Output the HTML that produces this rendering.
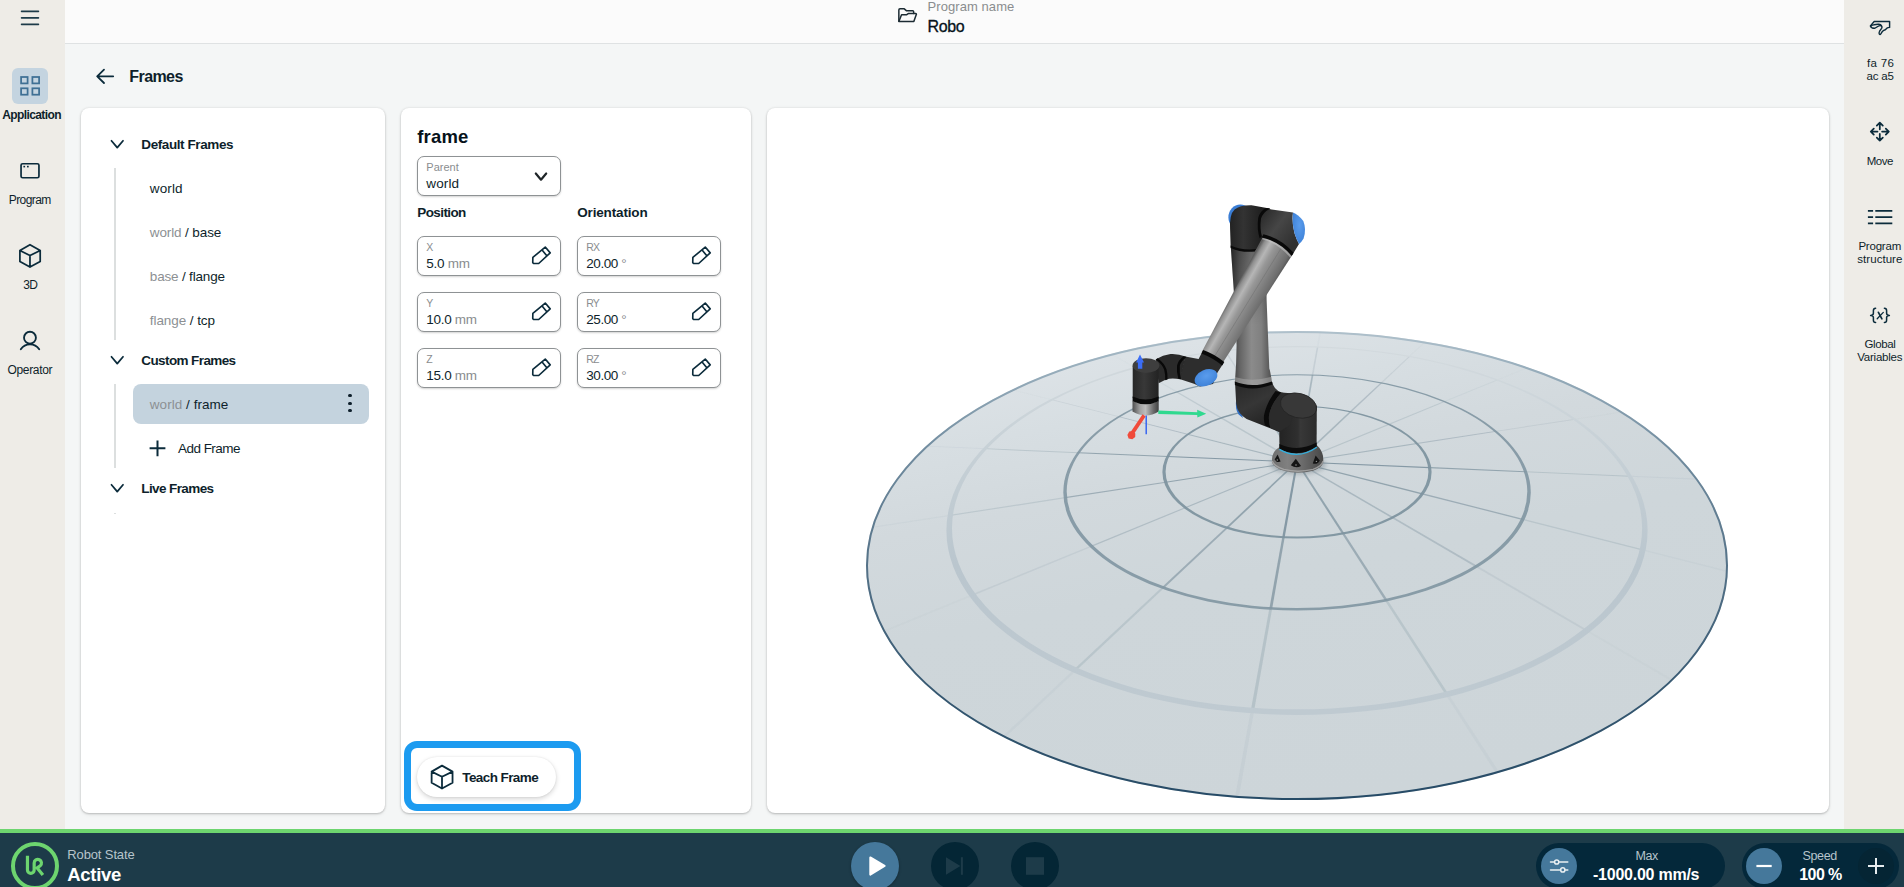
<!DOCTYPE html>
<html lang="en"><head><meta charset="utf-8"><title>Frames</title>
<style>

*{box-sizing:border-box;margin:0;padding:0}
html,body{width:1904px;height:887px;overflow:hidden;background:#f4f6f6}
body{font-family:"Liberation Sans",sans-serif;color:#0e1f2b}
#app{position:relative;width:1904px;height:887px;overflow:hidden;background:#f4f6f6}
.a{position:absolute}
.t{position:absolute;white-space:pre}
.side-l{left:0;top:0;width:65px;height:829px;background:#eeece7}
.side-r{left:1844px;top:0;width:60px;height:829px;background:#eeece7}
.hdr{left:65px;top:0;width:1779px;height:44px;background:#fbfbfb;border-bottom:1px solid #dfe2e3}
.panel{background:#fff;border-radius:8px;box-shadow:0 1px 2px rgba(0,0,0,.17),0 2px 4px rgba(0,0,0,.05),0 0 3px rgba(0,0,0,.10)}
.appbg{left:12px;top:68px;width:36px;height:36px;border-radius:6px;background:#c4d4e0}
.tline{width:1.5px;background:#dcdfdf;left:114.4px}
.sel{left:133px;top:384px;width:235.5px;height:40px;border-radius:8px;background:#c4d3de}
.dot{width:3.2px;height:3.2px;border-radius:50%;background:#0e1f2b;left:348.4px}
.fld{height:39.5px;width:143.5px;border:1px solid #8e9294;border-radius:7px;background:#fff;box-shadow:0 1px 2px rgba(0,0,0,.18)}
.hl{left:404px;top:741px;width:176.6px;height:70px;border:7px solid #1c9bf0;border-radius:13px}
.pill{left:417px;top:757px;width:139px;height:40px;border-radius:20px;background:#fff;box-shadow:0 2px 5px rgba(0,0,0,.17),0 0 2px rgba(0,0,0,.08)}
.green{left:0;top:829px;width:1904px;height:4px;background:#6dd56f}
.bar{left:0;top:833px;width:1904px;height:54px;background:#1d3b49}
.circ{border-radius:50%}
.bpill{top:843px;height:46px;border-radius:23px;background:#04283a}

</style></head>
<body>
<div id="app">
<div class="a side-l"></div>
<div class="a side-r"></div>
<div class="a hdr"></div>
<div class="a appbg"></div>
<div class="a panel" style="left:81px;top:108px;width:304px;height:704.9px"></div>
<div class="a panel" style="left:401px;top:108px;width:350px;height:704.9px"></div>
<div class="a panel" style="left:767px;top:108px;width:1062px;height:704.9px"></div>
<div class="a tline" style="top:168px;height:172px"></div>
<div class="a tline" style="top:384px;height:84px"></div>
<div class="a tline" style="top:512.5px;height:1px"></div>
<div class="a sel"></div>
<div class="a dot" style="top:394.2px"></div>
<div class="a dot" style="top:401.7px"></div>
<div class="a dot" style="top:409.2px"></div>
<div class="a fld" style="left:417px;top:156.3px"></div>
<div class="a fld" style="left:417px;top:236.2px"></div>
<div class="a fld" style="left:577px;top:236.2px"></div>
<div class="a fld" style="left:417px;top:292.2px"></div>
<div class="a fld" style="left:577px;top:292.2px"></div>
<div class="a fld" style="left:417px;top:348.2px"></div>
<div class="a fld" style="left:577px;top:348.2px"></div>
<div class="a hl"></div>
<div class="a pill"></div>
<div class="a green"></div>
<div class="a bar"></div>
<div class="a circ" style="left:10.9px;top:841.9px;width:48.1px;height:48.1px;border:4.4px solid #6dd56f"></div>
<div class="a circ" style="left:851px;top:841.7px;width:48px;height:48px;background:#45789b;box-shadow:0 1px 3px rgba(0,0,0,.3)"></div>
<div class="a circ" style="left:931px;top:842.2px;width:48px;height:48px;background:#042635"></div>
<div class="a circ" style="left:1011px;top:842.2px;width:48px;height:48px;background:#042635"></div>
<div class="a bpill" style="left:1536px;width:189px"></div>
<div class="a bpill" style="left:1741.5px;width:157.5px"></div>
<div class="a circ" style="left:1541px;top:847.9px;width:36px;height:36px;background:#45789b"></div>
<div class="a circ" style="left:1746px;top:847.9px;width:36px;height:36px;background:#45789b"></div>
<div class="a circ" style="left:1858px;top:847.9px;width:36px;height:36px;background:#052534"></div>
<svg class="a" style="left:767px;top:108px" width="1062" height="704" viewBox="767 108 1062 704">
<defs><linearGradient id="dg" gradientUnits="userSpaceOnUse" x1="1250" y1="331" x2="1340" y2="800"><stop offset="0" stop-color="#dce2e6"/><stop offset=".12" stop-color="#d7dee2"/><stop offset=".28" stop-color="#d2d9dd"/><stop offset=".5" stop-color="#ced6da"/><stop offset="1" stop-color="#cdd5d9"/></linearGradient><linearGradient id="edge" gradientUnits="userSpaceOnUse" x1="0" y1="330" x2="0" y2="800"><stop offset="0" stop-color="#b0c1cc"/><stop offset=".08" stop-color="#98aebc"/><stop offset=".25" stop-color="#728da0"/><stop offset=".5" stop-color="#557288"/><stop offset=".78" stop-color="#355770"/><stop offset="1" stop-color="#274b66"/></linearGradient><linearGradient id="r3" gradientUnits="userSpaceOnUse" x1="0" y1="346" x2="0" y2="712"><stop offset="0" stop-color="#d3dade"/><stop offset=".3" stop-color="#c6d0d6"/><stop offset=".6" stop-color="#bac6ce"/><stop offset="1" stop-color="#bfcad1"/></linearGradient><clipPath id="dc"><ellipse cx="1297.0" cy="565.5" rx="430.9" ry="234.5"/></clipPath><filter id="b0" x="-5%" y="-5%" width="110%" height="110%"><feGaussianBlur stdDeviation="0.45"/></filter><filter id="b1" x="-5%" y="-5%" width="110%" height="110%"><feGaussianBlur stdDeviation="0.6"/></filter><filter id="b2" x="-50%" y="-50%" width="200%" height="200%"><feGaussianBlur stdDeviation="2.2"/></filter></defs>
<ellipse cx="1297.0" cy="565.5" rx="430.9" ry="234.5" fill="url(#dg)"/>
<g clip-path="url(#dc)" stroke="none" filter="url(#b0)">
<path d="M1297.4,465.8 L1284.7,537.2 L1282.3,537.1 L1295.3,465.7 Z" fill="#8397a3" fill-opacity="0.97"/>
<path d="M1284.7,537.2 L1272.2,608.5 L1269.4,608.3 L1282.3,537.1 Z" fill="#8397a3" fill-opacity="0.80"/>
<path d="M1272.2,608.5 L1254.1,710.7 L1250.8,710.5 L1269.4,608.3 Z" fill="#8397a3" fill-opacity="0.32"/>
<path d="M1254.1,710.7 L1238.7,797.8 L1235.0,797.5 L1250.8,710.5 Z" fill="#8397a3" fill-opacity="0.10"/>
<path d="M1300.3,465.5 L1344.3,533.2 L1342.0,533.7 L1298.3,465.8 Z" fill="#8397a3" fill-opacity="0.80"/>
<path d="M1344.3,533.2 L1387.5,599.9 L1384.9,600.4 L1342.0,533.7 Z" fill="#8397a3" fill-opacity="0.66"/>
<path d="M1387.5,599.9 L1448.4,693.9 L1445.5,694.6 L1384.9,600.4 Z" fill="#8397a3" fill-opacity="0.27"/>
<path d="M1448.4,693.9 L1499.4,772.5 L1496.2,773.4 L1445.5,694.6 Z" fill="#8397a3" fill-opacity="0.08"/>
<path d="M1302.8,464.6 L1393.3,517.1 L1391.7,518.0 L1301.2,465.2 Z" fill="#8397a3" fill-opacity="0.49"/>
<path d="M1393.3,517.1 L1477.2,565.8 L1475.5,566.9 L1391.7,518.0 Z" fill="#8397a3" fill-opacity="0.40"/>
<path d="M1477.2,565.8 L1587.5,629.9 L1585.9,631.2 L1475.5,566.9 Z" fill="#8397a3" fill-opacity="0.16"/>
<path d="M1587.5,629.9 L1673.3,679.7 L1671.7,681.2 L1585.9,631.2 Z" fill="#8397a3" fill-opacity="0.05"/>
<path d="M1304.4,463.3 L1422.7,493.3 L1421.9,494.4 L1303.4,464.2 Z" fill="#8397a3" fill-opacity="0.80"/>
<path d="M1422.7,493.3 L1522.9,518.8 L1522.3,519.9 L1421.9,494.4 Z" fill="#8397a3" fill-opacity="0.66"/>
<path d="M1522.9,518.8 L1642.8,549.2 L1642.5,550.5 L1522.3,519.9 Z" fill="#8397a3" fill-opacity="0.27"/>
<path d="M1642.8,549.2 L1727.8,570.8 L1727.8,572.2 L1642.5,550.5 Z" fill="#8397a3" fill-opacity="0.08"/>
<path d="M1304.8,461.8 L1429.6,467.1 L1429.8,468.2 L1304.6,462.8 Z" fill="#8397a3" fill-opacity="0.97"/>
<path d="M1429.6,467.1 L1525.3,471.2 L1525.7,472.3 L1429.8,468.2 Z" fill="#8397a3" fill-opacity="0.80"/>
<path d="M1525.3,471.2 L1629.4,475.7 L1630.1,476.8 L1525.7,472.3 Z" fill="#8397a3" fill-opacity="0.32"/>
<path d="M1629.4,475.7 L1697.2,478.6 L1698.0,479.7 L1630.1,476.8 Z" fill="#8397a3" fill-opacity="0.10"/>
<path d="M1304.0,460.4 L1416.5,443.1 L1417.4,444.0 L1304.7,461.4 Z" fill="#8397a3" fill-opacity="0.53"/>
<path d="M1416.5,443.1 L1495.1,431.0 L1496.1,431.8 L1417.4,444.0 Z" fill="#8397a3" fill-opacity="0.44"/>
<path d="M1495.1,431.0 L1574.0,418.9 L1575.1,419.7 L1496.1,431.8 Z" fill="#8397a3" fill-opacity="0.18"/>
<path d="M1574.0,418.9 L1622.0,411.5 L1623.2,412.3 L1575.1,419.7 Z" fill="#8397a3" fill-opacity="0.05"/>
<path d="M1302.2,459.2 L1388.2,424.0 L1389.5,424.7 L1303.6,460.0 Z" fill="#8397a3" fill-opacity="0.32"/>
<path d="M1388.2,424.0 L1443.8,401.3 L1445.2,401.8 L1389.5,424.7 Z" fill="#8397a3" fill-opacity="0.27"/>
<path d="M1443.8,401.3 L1496.5,379.7 L1497.9,380.2 L1445.2,401.8 Z" fill="#8397a3" fill-opacity="0.11"/>
<path d="M1496.5,379.7 L1527.1,367.2 L1528.5,367.7 L1497.9,380.2 Z" fill="#8397a3" fill-opacity="0.03"/>
<path d="M1299.6,458.4 L1349.7,411.6 L1351.4,411.9 L1301.5,458.9 Z" fill="#8397a3" fill-opacity="0.53"/>
<path d="M1349.7,411.6 L1380.6,382.7 L1382.2,383.0 L1351.4,411.9 Z" fill="#8397a3" fill-opacity="0.44"/>
<path d="M1380.6,382.7 L1408.7,356.4 L1410.2,356.6 L1382.2,383.0 Z" fill="#8397a3" fill-opacity="0.18"/>
<path d="M1408.7,356.4 L1424.6,341.5 L1426.0,341.8 L1410.2,356.6 Z" fill="#8397a3" fill-opacity="0.05"/>
<path d="M1296.6,458.2 L1306.1,406.3 L1307.9,406.4 L1298.7,458.3 Z" fill="#8397a3" fill-opacity="0.65"/>
<path d="M1306.1,406.3 L1311.7,375.0 L1313.4,375.1 L1307.9,406.4 Z" fill="#8397a3" fill-opacity="0.53"/>
<path d="M1311.7,375.0 L1316.8,347.0 L1318.4,347.0 L1313.4,375.1 Z" fill="#8397a3" fill-opacity="0.22"/>
<path d="M1316.8,347.0 L1319.7,331.3 L1321.1,331.4 L1318.4,347.0 Z" fill="#8397a3" fill-opacity="0.06"/>
<path d="M1293.7,458.6 L1261.5,408.6 L1263.3,408.3 L1295.7,458.3 Z" fill="#8397a3" fill-opacity="0.53"/>
<path d="M1261.5,408.6 L1242.0,378.2 L1243.6,378.0 L1263.3,408.3 Z" fill="#8397a3" fill-opacity="0.44"/>
<path d="M1242.0,378.2 L1224.3,350.7 L1225.8,350.6 L1243.6,378.0 Z" fill="#8397a3" fill-opacity="0.18"/>
<path d="M1224.3,350.7 L1214.4,335.4 L1215.9,335.2 L1225.8,350.6 Z" fill="#8397a3" fill-opacity="0.05"/>
<path d="M1291.3,459.5 L1220.4,418.2 L1222.0,417.6 L1292.9,458.8 Z" fill="#8397a3" fill-opacity="0.32"/>
<path d="M1220.4,418.2 L1175.7,392.1 L1177.2,391.6 L1222.0,417.6 Z" fill="#8397a3" fill-opacity="0.27"/>
<path d="M1175.7,392.1 L1134.3,367.9 L1135.7,367.5 L1177.2,391.6 Z" fill="#8397a3" fill-opacity="0.11"/>
<path d="M1134.3,367.9 L1110.5,354.1 L1111.9,353.7 L1135.7,367.5 Z" fill="#8397a3" fill-opacity="0.03"/>
<path d="M1289.7,460.7 L1187.4,434.7 L1188.5,433.9 L1290.7,459.8 Z" fill="#8397a3" fill-opacity="0.53"/>
<path d="M1187.4,434.7 L1118.5,417.1 L1119.7,416.4 L1188.5,433.9 Z" fill="#8397a3" fill-opacity="0.44"/>
<path d="M1118.5,417.1 L1051.4,400.1 L1052.6,399.4 L1119.7,416.4 Z" fill="#8397a3" fill-opacity="0.18"/>
<path d="M1051.4,400.1 L1011.4,389.9 L1012.7,389.3 L1052.6,399.4 Z" fill="#8397a3" fill-opacity="0.05"/>
<path d="M1289.2,462.2 L1167.5,457.0 L1168.0,456.0 L1289.4,461.2 Z" fill="#8397a3" fill-opacity="0.97"/>
<path d="M1167.5,457.0 L1078.1,453.2 L1078.8,452.2 L1168.0,456.0 Z" fill="#8397a3" fill-opacity="0.80"/>
<path d="M1078.1,453.2 L984.5,449.1 L985.4,448.2 L1078.8,452.2 Z" fill="#8397a3" fill-opacity="0.32"/>
<path d="M984.5,449.1 L925.5,446.6 L926.6,445.7 L985.4,448.2 Z" fill="#8397a3" fill-opacity="0.10"/>
<path d="M1289.9,463.6 L1165.9,482.7 L1165.5,481.7 L1289.3,462.7 Z" fill="#8397a3" fill-opacity="0.80"/>
<path d="M1165.9,482.7 L1065.3,498.2 L1065.2,497.1 L1165.5,481.7 Z" fill="#8397a3" fill-opacity="0.66"/>
<path d="M1065.3,498.2 L950.1,516.0 L950.3,514.8 L1065.2,497.1 Z" fill="#8397a3" fill-opacity="0.27"/>
<path d="M950.1,516.0 L871.6,528.1 L872.0,526.8 L950.3,514.8 Z" fill="#8397a3" fill-opacity="0.08"/>
<path d="M1291.7,464.8 L1186.2,508.1 L1184.9,507.2 L1290.4,464.0 Z" fill="#8397a3" fill-opacity="0.49"/>
<path d="M1186.2,508.1 L1091.9,546.8 L1090.8,545.7 L1184.9,507.2 Z" fill="#8397a3" fill-opacity="0.40"/>
<path d="M1091.9,546.8 L972.9,595.7 L971.9,594.3 L1090.8,545.7 Z" fill="#8397a3" fill-opacity="0.16"/>
<path d="M972.9,595.7 L883.9,632.2 L883.1,630.7 L971.9,594.3 Z" fill="#8397a3" fill-opacity="0.05"/>
<path d="M1294.3,465.6 L1228.0,528.0 L1225.9,527.4 L1292.5,465.1 Z" fill="#8397a3" fill-opacity="0.80"/>
<path d="M1228.0,528.0 L1164.1,588.1 L1161.9,587.3 L1225.9,527.4 Z" fill="#8397a3" fill-opacity="0.66"/>
<path d="M1164.1,588.1 L1076.3,670.6 L1073.9,669.6 L1161.9,587.3 Z" fill="#8397a3" fill-opacity="0.27"/>
<path d="M1076.3,670.6 L1004.8,737.8 L1002.3,736.6 L1073.9,669.6 Z" fill="#8397a3" fill-opacity="0.08"/>
</g>
<path d="M1162.4,472.1 a134.6,66.5 0 1 0 269.2,0 a134.6,66.5 0 1 0 -269.2,0Z M1165.6,471.6 a131.4,64.9 0 1 0 262.8,0 a131.4,64.9 0 1 0 -262.8,0Z" fill-rule="evenodd" fill="#7d929e" fill-opacity=".92" filter="url(#b0)"/>
<path d="M1063.3,492.4 a233.7,118.1 0 1 0 467.5,0 a233.7,118.1 0 1 0 -467.5,0Z M1066.7,491.6 a230.3,116.3 0 1 0 460.6,0 a230.3,116.3 0 1 0 -460.6,0Z" fill-rule="evenodd" fill="#8196a2" fill-opacity=".9" filter="url(#b0)"/>
<path d="M946.4,530.5 a350.6,184.4 0 1 0 701.2,0 a350.6,184.4 0 1 0 -701.2,0Z M952.0,528.3 a345.0,181.0 0 1 0 690.1,0 a345.0,181.0 0 1 0 -690.1,0Z" fill-rule="evenodd" fill="url(#r3)" filter="url(#b1)"/>
<ellipse cx="1297.0" cy="565.5" rx="430.0" ry="233.6" fill="none" stroke="url(#edge)" stroke-width="2" filter="url(#b0)"/>
<defs>
<linearGradient id="ua" gradientUnits="userSpaceOnUse" x1="1232" y1="294" x2="1262" y2="311">
<stop offset="0" stop-color="#606060"/><stop offset=".08" stop-color="#8e8e8e"/><stop offset=".23" stop-color="#b6b6b6"/><stop offset=".4" stop-color="#979797"/><stop offset=".62" stop-color="#828282"/><stop offset=".86" stop-color="#6c6c6c"/><stop offset="1" stop-color="#4a4a4a"/></linearGradient>
<linearGradient id="la" gradientUnits="userSpaceOnUse" x1="1232" y1="0" x2="1271" y2="0">
<stop offset="0" stop-color="#3a3a3a"/><stop offset=".2" stop-color="#646464"/><stop offset=".5" stop-color="#8b8b8b"/><stop offset=".75" stop-color="#808080"/><stop offset="1" stop-color="#525252"/></linearGradient>
<linearGradient id="fl" gradientUnits="userSpaceOnUse" x1="1132" y1="0" x2="1159" y2="0">
<stop offset="0" stop-color="#4a4a4a"/><stop offset=".3" stop-color="#a2a2a2"/><stop offset=".5" stop-color="#bcbcbc"/><stop offset=".8" stop-color="#6a6a6a"/><stop offset="1" stop-color="#3e3e3e"/></linearGradient>
<linearGradient id="dk" gradientUnits="userSpaceOnUse" x1="1132" y1="0" x2="1159" y2="0">
<stop offset="0" stop-color="#262626"/><stop offset=".45" stop-color="#383838"/><stop offset="1" stop-color="#222"/></linearGradient>
<linearGradient id="bs" gradientUnits="userSpaceOnUse" x1="1279" y1="0" x2="1317" y2="0">
<stop offset="0" stop-color="#232323"/><stop offset=".5" stop-color="#2f2f2f"/><stop offset=".56" stop-color="#383838"/><stop offset="1" stop-color="#2b2b2b"/></linearGradient>
<linearGradient id="fg" gradientUnits="userSpaceOnUse" x1="1272" y1="0" x2="1324" y2="0">
<stop offset="0" stop-color="#707070"/><stop offset=".3" stop-color="#808080"/><stop offset=".6" stop-color="#6a6a6a"/><stop offset="1" stop-color="#464646"/></linearGradient>
<linearGradient id="sh" gradientUnits="userSpaceOnUse" x1="1240" y1="385" x2="1262" y2="425">
<stop offset="0" stop-color="#2a2a2a"/><stop offset=".5" stop-color="#363636"/><stop offset="1" stop-color="#242424"/></linearGradient>
<linearGradient id="el" gradientUnits="userSpaceOnUse" x1="1231" y1="0" x2="1262" y2="0">
<stop offset="0" stop-color="#242424"/><stop offset=".4" stop-color="#333"/><stop offset="1" stop-color="#1f1f1f"/></linearGradient>
<linearGradient id="er" gradientUnits="userSpaceOnUse" x1="1262" y1="215" x2="1296" y2="240">
<stop offset="0" stop-color="#2c2c2c"/><stop offset=".45" stop-color="#464646"/><stop offset="1" stop-color="#303030"/></linearGradient>
<linearGradient id="las" gradientUnits="userSpaceOnUse" x1="0" y1="247" x2="0" y2="325"><stop offset="0" stop-color="#000" stop-opacity=".28"/><stop offset="1" stop-color="#000" stop-opacity="0"/></linearGradient>
<radialGradient id="bl" cx=".55" cy=".4" r=".7"><stop offset="0" stop-color="#5a9cec"/><stop offset="1" stop-color="#3b7fd6"/></radialGradient>
</defs>
<ellipse cx="1298" cy="464.5" rx="28" ry="10" fill="#5b6a73" opacity=".35" filter="url(#b2)"/>
<path d="M1279.5,447 Q1273.6,450.6 1272.4,456 Q1271.8,459 1272,462.4 Q1274,467.6 1283.8,470.8 Q1297.4,474.6 1313.1,470.8 Q1322,467.4 1323.2,462.4 Q1323.4,459 1323,456 Q1322,450 1316.6,445Z" fill="url(#fg)"/>
<path d="M1272.2,461 Q1274,466.4 1283.8,469.4 Q1297.4,473 1313.1,469.4 Q1322,466.2 1323.1,461" fill="none" stroke="#b0b0b0" stroke-width="1.4" opacity=".75"/>
<g fill="#141414"><path d="M1274.6,459.4 L1277.6,454.6 L1280.6,461.6 Q1277,463.2 1274.6,459.4Z"/><path d="M1290.8,465.2 L1295.8,458.8 L1301,466 Q1296,469 1290.8,465.2Z"/><path d="M1312.8,463.4 L1315.6,455.6 L1319.8,460.4 Q1317.6,464.8 1312.8,463.4Z"/></g>
<g fill="#8d8d8d"><circle cx="1277.3" cy="460" r=".7"/><circle cx="1296" cy="465" r=".8"/><circle cx="1316.4" cy="461.4" r=".7"/></g>
<path d="M1279.2,428 L1279.5,448.6 Q1298,458.7 1316.6,446.4 L1316.8,406 Q1300,396 1283,400Z" fill="url(#bs)"/>
<path d="M1279.4,444 Q1298,452.4 1316.7,442.6 L1316.6,446.6 Q1298,458.9 1279.5,448.8Z" fill="#0c0c0c"/>
<path d="M1279.4,449.4 Q1298,460.4 1316.8,447.2" fill="none" stroke="#2fb0e0" stroke-width="1.3"/>
<path d="M1236.4,398 Q1234.6,409 1238.6,414.6 L1243,418 L1240,410Z" fill="#2f6fc6"/>
<path d="M1235,382 L1236.2,404 Q1237.5,413.5 1246.6,419 L1279.3,431.9 L1290,420 L1288,394 L1281.5,392.5 Q1273.5,389.5 1272.3,382Z" fill="url(#sh)"/>
<path d="M1275.5,391 Q1266.5,403 1264,415.5 Q1263.5,421 1265.1,425.6 L1270.2,427.6 Q1268.4,421 1269,415.5 Q1271,404 1281.4,392.6Z" fill="#0b0b0b"/>
<path d="M1281.4,392.6 Q1270.5,404.5 1269,415.5 Q1268.4,421 1270.2,427.6 L1279.3,431.9 L1290,425 L1300,394Z" fill="#2b2b2b"/>
<g transform="rotate(14 1298.5 405.6)"><ellipse cx="1298.5" cy="405.6" rx="18.4" ry="12.2" fill="#383838"/><ellipse cx="1298.5" cy="405.6" rx="18.4" ry="12.2" fill="none" stroke="#242424" stroke-width=".8"/></g>
<path d="M1230.8,247 L1234,294 L1236.6,345 Q1236.4,365 1234.9,382.5 Q1252,388.5 1271.9,382.5 Q1270.4,371 1269.3,368.5 L1266.6,300 L1266,247Z" fill="url(#la)"/>
<path d="M1230.8,247 L1234,294 L1235.5,325 L1268,325 L1266.6,300 L1266,247Z" fill="url(#las)"/>
<path d="M1234.9,377 Q1252,382.5 1271.5,376.8 L1271.9,382.5 Q1252,388.5 1234.9,382.5Z" fill="#b2b2b2" opacity=".45"/>
<path d="M1234.8,381.6 Q1252,388.6 1272,381.4 L1272.2,384.6 Q1252,392 1234.9,384.9Z" fill="#0b0b0b"/>
<ellipse cx="1240.3" cy="217.2" rx="11.9" ry="12.6" fill="#3a7dd4"/>
<path d="M1251.6,205.3 L1269.6,208.6 L1266,240 L1255.3,250.6 Q1243,252.3 1230.7,247.2 L1230.1,229.6 Q1229.2,214.5 1234.6,209.6 Q1240,205 1251.6,205.3Z" fill="url(#el)"/>
<path d="M1230.6,245.5 Q1242,250.6 1256,249 L1255,251.4 Q1242,253 1230.7,247.9Z" fill="#0a0a0a"/>
<path d="M1263.3,236 L1201.6,352.3 L1222.4,363.3 L1292.6,254.6 Q1280,240 1263.3,236Z" fill="url(#ua)"/>
<path d="M1281,248.5 L1213.5,358" stroke="#6e6e6e" stroke-width=".7" fill="none" opacity=".7"/>
<path d="M1263.6,236 Q1280,240 1292.3,254.6 L1290.3,257.8 Q1278.5,243.5 1262,239.2Z" fill="#c9c9c9" opacity=".55"/>
<path d="M1266.4,208.6 L1293,212.5 Q1291.6,222 1294.6,233.5 Q1296.5,239.5 1299,243.9 L1292.3,254.9 Q1281,240.5 1263.8,235.4 L1260.8,237.6 Q1258.4,229 1259.9,217.7 Q1261.8,212 1266.4,208.6Z" fill="url(#er)"/>
<path d="M1270.2,208.5 Q1262.8,212.5 1261,218.6 Q1259.6,229 1262,236.6 L1259.6,238.2 Q1256.8,229 1258.2,218 Q1260,211 1266,208Z" fill="#090909"/>
<path d="M1263.4,234.2 Q1281.4,238.4 1293.6,252.8 L1291.7,256 Q1280,241.8 1261.8,237.4Z" fill="#090909"/>
<path d="M1293,212.5 Q1298,214.3 1303.3,220.9 Q1306.6,229 1303.6,238.6 Q1301.6,242.2 1299,243.9 Q1296.4,239.5 1294.6,233.5 Q1291.6,222 1293,212.5Z" fill="url(#bl)"/>
<path d="M1185.2,356.6 L1198.6,359 L1202.6,351.2 L1223.4,363.2 L1217.5,372.5 L1213,384 L1200,386.5 L1194,383.8 L1179.5,379Z" fill="#2d2d2d"/>
<g transform="rotate(-24 1206 377.8)"><ellipse cx="1206" cy="377.8" rx="11.9" ry="7.9" fill="url(#bl)"/></g>
<path d="M1203.2,349.9 Q1214.2,353.8 1224.3,361.9 L1222.2,365.4 Q1212.3,357.4 1201.4,353.4Z" fill="#090909"/>
<path d="M1155.8,359.2 Q1163,355 1170.5,354.1 Q1178,353.6 1185.6,356.6 L1180.2,379.3 Q1172,377.6 1166,379.4 L1158.6,383.2Z" fill="#2a2a2a"/>
<path d="M1157.8,358.2 Q1164.6,363.5 1166.5,369.3 Q1167.8,374 1167.5,379.4 L1165.2,380.2 Q1165.4,374.3 1164.2,369.8 Q1162.3,364.2 1155.8,359.4Z" fill="#080808"/>
<path d="M1186.6,357 Q1180.8,361 1179.8,366 Q1179.2,372.5 1181,379.2 L1178.3,378.6 Q1176.4,372.5 1177,365.8 Q1178.2,360 1183.6,356.2Z" fill="#080808"/>
<path d="M1132.7,366 L1132.7,398 Q1145.5,404 1158.6,398 L1158.6,366Z" fill="url(#dk)"/>
<ellipse cx="1146" cy="365.6" rx="13.4" ry="7.4" fill="#3e3e3e"/>
<path d="M1132.5,401 Q1145.5,406.5 1158.7,401 L1158.7,411.5 Q1146,419.5 1132.5,411.5Z" fill="url(#fl)"/>
<path d="M1132.6,396.4 Q1145.5,402.4 1158.7,396.4 L1158.7,401.2 Q1145.5,407.2 1132.6,401.2Z" fill="#0a0a0a"/>
<path d="M1146.2,415.5V434.2" stroke="#2c5df2" stroke-width="1.4" fill="none"/>
<path d="M1142.6,414.3 L1145.6,416.4 L1133.6,434.6 L1130.3,432.4Z" fill="#f04b3b"/>
<path d="M1129.2,431.6 L1132.6,430.9 L1135.3,433.4 L1135.2,437 L1132.3,439.2 L1128.6,438.6 L1127.4,435Z" fill="#f04b3b"/>
<path d="M1158.3,410.4 L1197.2,412.2 L1197.2,409.8 L1206.2,413.8 L1197.4,417.4 L1197.2,415 L1158.3,413.9Z" fill="#30d98f"/>
<path d="M1140,354.5 L1144,362.6 L1142.3,362.6 L1142.3,368.8 L1137.9,368.8 L1137.9,362.6 L1136.1,362.6Z" fill="#3b6df6"/>
</svg>
<svg class="a" style="left:0;top:0" width="1904" height="887" viewBox="0 0 1904 887" fill="none" stroke="#0b2b3b" stroke-linecap="round" stroke-linejoin="round">
<g stroke-width="1.7" stroke="#1d3b49"><path d="M21.6,11.3H38.4M21.6,17.8H38.4M21.6,24.3H38.4"/></g>
<g stroke-width="1.75" stroke="#3f7094" stroke-linejoin="miter"><rect x="21.1" y="77" width="6.5" height="6.4"/><rect x="32.4" y="77" width="6.7" height="6.4"/><rect x="21.1" y="88.3" width="6.5" height="6.4"/><rect x="32.4" y="88.3" width="6.7" height="6.4"/></g>
<g stroke-width="1.7"><rect x="21.05" y="163.75" width="17.9" height="14" rx="1.6"/></g><g stroke="none" fill="#0b2b3b"><rect x="23.4" y="165.8" width="1.7" height="1.6"/><rect x="27" y="165.8" width="1.7" height="1.6"/></g>
<g stroke-width="1.75"><path d="M29.97,244.70 L40.20,250.55 L40.20,261.40 L29.97,267.00 L19.90,261.40 L19.90,250.55Z M19.90,250.55 L29.97,255.50 L40.20,250.55 M29.97,255.50 L29.97,267.00"/></g>
<g stroke-width="1.85"><circle cx="29.97" cy="337.7" r="5.95"/><path d="M20.8,349.3 A11,11 0 0 1 39.2,349.3"/></g>
<g stroke-width="1.8"><path d="M97.2,76.3H113.2M104,69.6L97.2,76.3L104,83"/></g>
<g stroke-width="1.75"><path d="M111.45,140.80 L117.25,147.60 L123.05,140.80"/><path d="M111.45,356.80 L117.25,363.60 L123.05,356.80"/><path d="M111.45,484.80 L117.25,491.60 L123.05,484.80"/></g>
<g stroke-width="2" stroke-linecap="butt"><path d="M149.6,448.3H165.4M157.5,440.4V456.2"/></g>
<g stroke-width="2.2" stroke="#1f2528"><path d="M535.80,173.50 L541.00,179.70 L546.20,173.50"/></g>
<g stroke-width="1.65">
<path d="M545.25,247.05 L550.20,252.90 L538.70,263.50 L533.60,263.50 L532.75,262.60 L532.85,257.40Z M542.10,250.00 L546.80,255.80"/>
<path d="M705.25,247.05 L710.20,252.90 L698.70,263.50 L693.60,263.50 L692.75,262.60 L692.85,257.40Z M702.10,250.00 L706.80,255.80"/>
<path d="M545.25,303.05 L550.20,308.90 L538.70,319.50 L533.60,319.50 L532.75,318.60 L532.85,313.40Z M542.10,306.00 L546.80,311.80"/>
<path d="M705.25,303.05 L710.20,308.90 L698.70,319.50 L693.60,319.50 L692.75,318.60 L692.85,313.40Z M702.10,306.00 L706.80,311.80"/>
<path d="M545.25,359.05 L550.20,364.90 L538.70,375.50 L533.60,375.50 L532.75,374.60 L532.85,369.40Z M542.10,362.00 L546.80,367.80"/>
<path d="M705.25,359.05 L710.20,364.90 L698.70,375.50 L693.60,375.50 L692.75,374.60 L692.85,369.40Z M702.10,362.00 L706.80,367.80"/>
</g>
<g stroke-width="1.8"><path d="M442.00,765.62 L452.54,771.64 L452.54,782.82 L442.00,788.58 L431.63,782.82 L431.63,771.64Z M431.63,771.64 L442.00,776.74 L452.54,771.64 M442.00,776.74 L442.00,788.58"/></g>
<g stroke-width="1.5" stroke="#1c2b33"><path d="M898.85,21.3V9.95Q898.85,8.85 899.95,8.85H904.26L906.6,10.83H912.7Q913.65,10.83 913.65,11.8V13.4"/><path d="M898.85,21.48L901.55,14.8H906.43L908.23,13.54H915.6Q916.7,13.6 916.3,14.6L913.83,21.48Z"/></g>
<g stroke-width="1.45"><path d="M1889.6,21.5H1874.2L1870.4,25.9Q1871.2,28.2 1874.5,28.3Q1876.2,27.6 1877.7,26.5Q1879.4,25.4 1880.9,25.7Q1882.6,26.6 1881.6,28.3L1879.6,31.2Q1878.6,33.3 1879.3,34Q1880,35 1880.8,33.9L1882.6,31.2Q1883.6,30.3 1885.3,29.8L1887.4,27.8Q1888.3,27.3 1889.6,27.4Z"/><path d="M1870.9,25.9Q1872.2,24.9 1874,24.7Q1876.4,24.2 1878.8,24.3Q1880.8,24.4 1881.4,25.6"/></g>
<g stroke-width="1.75"><path d="M1882.10,131.60L1888.80,131.60M1885.80,134.60L1888.80,131.60L1885.80,128.60M1877.50,131.60L1870.80,131.60M1873.80,128.60L1870.80,131.60L1873.80,134.60M1879.80,133.90L1879.80,140.60M1876.80,137.60L1879.80,140.60L1882.80,137.60M1879.80,129.30L1879.80,122.60M1882.80,125.60L1879.80,122.60L1876.80,125.60"/></g>
<g stroke-width="1.8" stroke-linecap="butt"><path d="M1867.9,210.8H1873.1M1875.3,210.8H1892.3M1867.9,217.1H1873.1M1875.3,217.1H1892.3M1867.9,223.4H1873.1M1875.3,223.4H1892.3"/></g>
<g stroke-width="1.5"><path d="M1875.6,308.3Q1873.4,308.3 1873.4,310.6V313.3Q1873.4,315.4 1870.6,315.45Q1873.4,315.5 1873.4,317.6V320.3Q1873.4,322.6 1875.6,322.6"/><path d="M1884.4,308.3Q1886.6,308.3 1886.6,310.6V313.3Q1886.6,315.4 1889.4,315.45Q1886.6,315.5 1886.6,317.6V320.3Q1886.6,322.6 1884.4,322.6"/><path d="M1883.3,312.4L1877.2,318.7" stroke-width="1.3"/><path d="M1878.4,312.3L1881.9,318.8" stroke-width="1.7"/></g>
<g stroke="#6dd56f" stroke-width="3.2" stroke-linecap="butt"><path d="M27.46,855.8V870.1A3.35,3.35 0 0 0 34.16,870.1V863A3.65,3.65 0 1 1 40.2,865.8L37.2,867.9L42.9,875.1"/></g>
<g stroke="#fff" fill="#fff" stroke-width="2"><path d="M870.3,857.4L884.6,865.9L870.3,874.6Z"/></g>
<g stroke="none" fill="#1d3b49"><path d="M946,857.2L960.4,866L946,874.8Z"/><rect x="960.9" y="857.2" width="2" height="17.6"/></g>
<g stroke="none" fill="#1d3b49"><rect x="1026" y="857.2" width="18" height="17.6"/></g>
<g stroke="#e9eff2" stroke-width="1.5"><path d="M1550.5,862H1567.8M1550.5,869.9H1567.8"/><circle cx="1556.7" cy="862" r="2.1" fill="#45789b"/><circle cx="1562.8" cy="869.9" r="2.1" fill="#45789b"/></g>
<g stroke="#fff" stroke-width="2.2" stroke-linecap="butt"><path d="M1756.4,866H1771.7"/></g>
<g stroke="#e6ecef" stroke-width="2" stroke-linecap="butt"><path d="M1868,866H1884M1876,858V874"/></g>
</svg>
<div class="t" style="left:2.20px;top:109.00px;font-size:12px;line-height:12px;font-weight:700;color:#0e1f2b;letter-spacing:-0.600px;">Application</div>
<div class="t" style="left:8.80px;top:194.00px;font-size:12px;line-height:12px;color:#0e1f2b;letter-spacing:-0.586px;">Program</div>
<div class="t" style="left:23.30px;top:279.00px;font-size:12px;line-height:12px;color:#0e1f2b;letter-spacing:-0.600px;">3D</div>
<div class="t" style="left:7.50px;top:364.00px;font-size:12px;line-height:12px;color:#0e1f2b;letter-spacing:-0.337px;">Operator</div>
<div class="t" style="left:129.30px;top:69.00px;font-size:16px;line-height:16px;font-weight:700;color:#0e1f2b;letter-spacing:-0.584px;">Frames</div>
<div class="t" style="left:141.30px;top:138.00px;font-size:13.5px;line-height:13.5px;font-weight:700;color:#0e1f2b;letter-spacing:-0.411px;">Default Frames</div>
<div class="t" style="left:149.80px;top:182.00px;font-size:13.5px;line-height:13.5px;color:#0e1f2b;letter-spacing:0.109px;">world</div>
<div class="t" style="left:149.80px;top:226.00px;font-size:13.5px;line-height:13.5px;color:#0e1f2b;letter-spacing:-0.118px;"><span style="color:#8c9093">world</span> / base</div>
<div class="t" style="left:149.80px;top:270.00px;font-size:13.5px;line-height:13.5px;color:#0e1f2b;letter-spacing:-0.176px;"><span style="color:#8c9093">base</span> / flange</div>
<div class="t" style="left:149.80px;top:314.00px;font-size:13.5px;line-height:13.5px;color:#0e1f2b;letter-spacing:-0.077px;"><span style="color:#8c9093">flange</span> / tcp</div>
<div class="t" style="left:141.30px;top:354.00px;font-size:13.5px;line-height:13.5px;font-weight:700;color:#0e1f2b;letter-spacing:-0.600px;">Custom Frames</div>
<div class="t" style="left:149.80px;top:398.00px;font-size:13.5px;line-height:13.5px;color:#0e1f2b;letter-spacing:0.039px;"><span style="color:#8c9093">world</span> / frame</div>
<div class="t" style="left:178.00px;top:442.00px;font-size:13.5px;line-height:13.5px;color:#0e1f2b;letter-spacing:-0.535px;">Add Frame</div>
<div class="t" style="left:141.30px;top:482.00px;font-size:13.5px;line-height:13.5px;font-weight:700;color:#0e1f2b;letter-spacing:-0.600px;">Live Frames</div>
<div class="t" style="left:417.30px;top:128.00px;font-size:18.5px;line-height:18.5px;font-weight:700;color:#06121a;letter-spacing:0.152px;">frame</div>
<div class="t" style="left:426.30px;top:162.00px;font-size:11px;line-height:11px;color:#8a8d8f;letter-spacing:0.016px;">Parent</div>
<div class="t" style="left:426.30px;top:177.00px;font-size:13.5px;line-height:13.5px;color:#0e1f2b;letter-spacing:0.109px;">world</div>
<div class="t" style="left:417.30px;top:206.00px;font-size:13.5px;line-height:13.5px;font-weight:700;color:#0e1f2b;letter-spacing:-0.600px;">Position</div>
<div class="t" style="left:577.20px;top:206.00px;font-size:13.5px;line-height:13.5px;font-weight:700;color:#0e1f2b;letter-spacing:-0.152px;">Orientation</div>
<div class="t" style="left:426.30px;top:242.00px;font-size:10.5px;line-height:10.5px;color:#8a8d8f;">X</div>
<div class="t" style="left:426.30px;top:257.00px;font-size:13.5px;line-height:13.5px;color:#0e1f2b;letter-spacing:-0.263px;">5.0 <span style="color:#8a8d8f">mm</span></div>
<div class="t" style="left:426.30px;top:298.00px;font-size:10.5px;line-height:10.5px;color:#8a8d8f;">Y</div>
<div class="t" style="left:426.30px;top:313.00px;font-size:13.5px;line-height:13.5px;color:#0e1f2b;letter-spacing:-0.305px;">10.0 <span style="color:#8a8d8f">mm</span></div>
<div class="t" style="left:426.30px;top:354.00px;font-size:10.5px;line-height:10.5px;color:#8a8d8f;">Z</div>
<div class="t" style="left:426.30px;top:369.00px;font-size:13.5px;line-height:13.5px;color:#0e1f2b;letter-spacing:-0.305px;">15.0 <span style="color:#8a8d8f">mm</span></div>
<div class="t" style="left:586.30px;top:242.00px;font-size:10.5px;line-height:10.5px;color:#8a8d8f;letter-spacing:-1.000px;">RX</div>
<div class="t" style="left:586.30px;top:257.00px;font-size:13.5px;line-height:13.5px;color:#0e1f2b;letter-spacing:-0.440px;">20.00 <span style="color:#8a8d8f">°</span></div>
<div class="t" style="left:586.30px;top:298.00px;font-size:10.5px;line-height:10.5px;color:#8a8d8f;letter-spacing:-1.000px;">RY</div>
<div class="t" style="left:586.30px;top:313.00px;font-size:13.5px;line-height:13.5px;color:#0e1f2b;letter-spacing:-0.440px;">25.00 <span style="color:#8a8d8f">°</span></div>
<div class="t" style="left:586.30px;top:354.00px;font-size:10.5px;line-height:10.5px;color:#8a8d8f;letter-spacing:-1.000px;">RZ</div>
<div class="t" style="left:586.30px;top:369.00px;font-size:13.5px;line-height:13.5px;color:#0e1f2b;letter-spacing:-0.440px;">30.00 <span style="color:#8a8d8f">°</span></div>
<div class="t" style="left:462.30px;top:771.00px;font-size:13.5px;line-height:13.5px;font-weight:700;color:#0e1f2b;letter-spacing:-0.590px;">Teach Frame</div>
<div class="t" style="left:927.60px;top:0.00px;font-size:13px;line-height:13px;color:#8a8d8f;letter-spacing:0.065px;">Program name</div>
<div class="t" style="left:927.60px;top:19.00px;font-size:16px;line-height:16px;color:#06121a;letter-spacing:-0.417px;-webkit-text-stroke:0.3px #06121a;">Robo</div>
<div class="t" style="left:1867.00px;top:58.00px;font-size:11.5px;line-height:11.5px;color:#0e1f2b;letter-spacing:0.330px;">fa 76</div>
<div class="t" style="left:1866.50px;top:71.00px;font-size:11.5px;line-height:11.5px;color:#0e1f2b;letter-spacing:-0.185px;">ac a5</div>
<div class="t" style="left:1866.80px;top:156.00px;font-size:11.5px;line-height:11.5px;color:#0e1f2b;letter-spacing:-0.508px;">Move</div>
<div class="t" style="left:1858.40px;top:241.00px;font-size:11.5px;line-height:11.5px;color:#0e1f2b;letter-spacing:-0.202px;">Program</div>
<div class="t" style="left:1857.30px;top:254.00px;font-size:11.5px;line-height:11.5px;color:#0e1f2b;letter-spacing:0.044px;">structure</div>
<div class="t" style="left:1864.50px;top:339.00px;font-size:11.5px;line-height:11.5px;color:#0e1f2b;letter-spacing:-0.410px;">Global</div>
<div class="t" style="left:1857.30px;top:352.00px;font-size:11.5px;line-height:11.5px;color:#0e1f2b;letter-spacing:-0.249px;">Variables</div>
<div class="t" style="left:67.30px;top:848.00px;font-size:13px;line-height:13px;color:#b7c4cb;letter-spacing:-0.126px;">Robot State</div>
<div class="t" style="left:67.30px;top:866.00px;font-size:18.5px;line-height:18.5px;font-weight:700;color:#ffffff;letter-spacing:-0.326px;">Active</div>
<div class="t" style="left:1635.40px;top:850.00px;font-size:12.5px;line-height:12.5px;color:#b7c4cb;letter-spacing:-0.412px;">Max</div>
<div class="t" style="left:1593.00px;top:867.00px;font-size:16px;line-height:16px;font-weight:700;color:#ffffff;letter-spacing:-0.242px;">-1000.00 mm/s</div>
<div class="t" style="left:1802.40px;top:850.00px;font-size:12.5px;line-height:12.5px;color:#b7c4cb;letter-spacing:-0.314px;">Speed</div>
<div class="t" style="left:1799.30px;top:867.00px;font-size:16px;line-height:16px;font-weight:700;color:#ffffff;letter-spacing:-0.600px;">100 %</div>
</div>
</body></html>
